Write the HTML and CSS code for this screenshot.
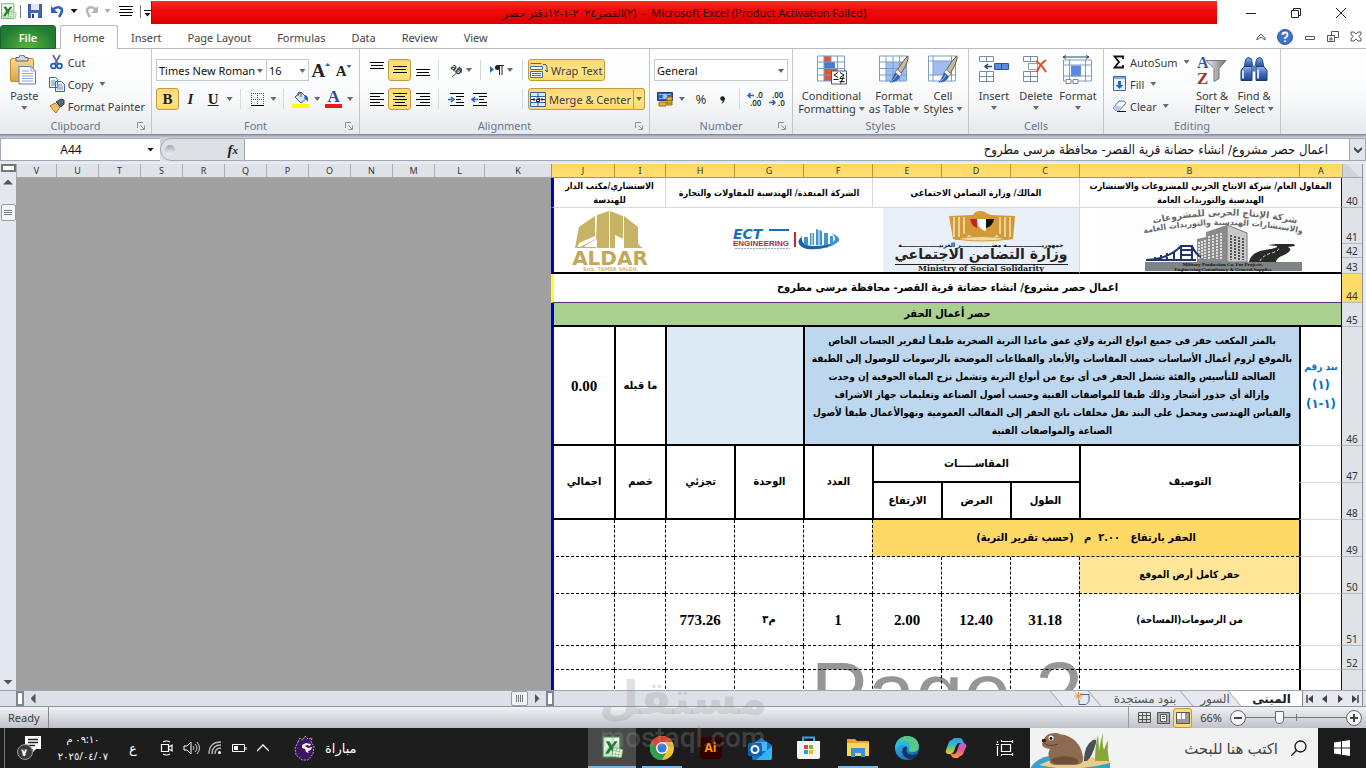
FILE: index.html
```html
<!DOCTYPE html>
<html lang="en">
<head>
<meta charset="utf-8">
<title>Microsoft Excel</title>
<link rel="stylesheet" href="styles.css">
</head>
<body>
<svg class="defs" aria-hidden="true">
  <defs>
    <linearGradient id="gGold" x2="0" y2="1"><stop stop-color="#fbd98c"/><stop offset="1" stop-color="#e0a33a"/></linearGradient>
    <linearGradient id="gBlue" x2="0" y2="1"><stop stop-color="#8fb2e6"/><stop offset=".5" stop-color="#3f6fc0"/><stop offset="1" stop-color="#21437f"/></linearGradient>
    <linearGradient id="gSteel" x2="1" y2="0"><stop stop-color="#f2f2f2"/><stop offset="1" stop-color="#707070"/></linearGradient>
    <linearGradient id="gEdge" x2="1" y2="1"><stop stop-color="#39c6f0"/><stop offset="1" stop-color="#0c4fa8"/></linearGradient>
    <linearGradient id="gCop" x2="0" y2="1"><stop stop-color="#2a9df4"/><stop offset=".45" stop-color="#3bb9c4"/><stop offset=".7" stop-color="#8ccc4a"/><stop offset="1" stop-color="#f8c21c"/></linearGradient>
    <linearGradient id="gCop2" x2="0" y2="1"><stop stop-color="#b55ef0"/><stop offset=".5" stop-color="#f0568f"/><stop offset="1" stop-color="#ff9a3c"/></linearGradient>
    <symbol id="excel" viewBox="0 0 22 22">
      <path d="M2 1h16v19H2z" fill="#e4f3e2" stroke="#4a9a52"/>
      <path d="M3 2h14v17H3z" fill="#c4e3bf"/><path d="M3 2h14v5Q8 7 3 14z" fill="#eef8ec"/>
      <path d="M4.500 5h3.600l2 3.500L13 5h3l-4.300 5.700L15.500 17h-3.800l-2-4-2.700 4H4l4-6.300z" fill="#1e7b34"/>
      <path d="M12 11l9 2-1.500 7.500-9-1z" fill="#f7fbf6" stroke="#6fae6b" stroke-width=".8"/><path d="M12 14l8 1.500M11.500 17l8 1.200M15 12l-1.500 8M18 12.500l-1.500 8" stroke="#7fb77a" stroke-width=".7"/>
    </symbol>
    <symbol id="brush" viewBox="0 0 20 28">
      <path d="M19 0Q20 6 12 18l-4-3Q14 5 19 0z" fill="#c9b9a2" stroke="#6b5b48"/>
      <path d="M8 14l5 4-2 3-5-4z" fill="#f4f4f4" stroke="#666" stroke-width=".7"/>
      <path d="M6 17l5 4q-2 6-11 6 3-2 6-10z" fill="#2f62b0"/><path d="M2 26q4-2 6-7" stroke="#9dbdf0" fill="none"/>
    </symbol>
    <symbol id="launch" viewBox="0 0 8 8"><path d="M.5 6V.5H6M3.500 3.500l3.500 3.500M7.500 3.500v4h-4" fill="none" stroke="#8d939b"/></symbol>
  </defs>
</svg>

<header class="titlebar">
  <div class="quick">
    <button class="q-app" aria-label="Excel"><svg width="17" height="17"><use href="#excel"/></svg></button>
    <i class="bar"></i>
    <button class="q-btn" aria-label="Save"><svg width="14" height="14" viewBox="0 0 14 14"><path d="M1 0h12l1 1v13H0V1z" fill="#4467b8" stroke="#263f87" stroke-width=".8"/><path d="M3 0h8v6H3z" fill="#dfe9fa"/><path d="M3 9h7v5H3z" fill="#fff"/><path d="M4 10h2v4H4z" fill="#263f87"/></svg></button>
    <button class="q-btn undo" aria-label="Undo"><svg width="13" height="13" viewBox="0 0 13 13"><path d="M2 4.500Q6 1 9.500 3T8 12" fill="none" stroke="#2b62b8" stroke-width="2.600"/><path d="M0 1v7h7z" fill="#2b62b8"/></svg><i class="caret dark"></i></button>
    <button class="q-btn redo" aria-label="Redo"><svg width="13" height="13" viewBox="0 0 13 13"><path d="M11 4.500Q7 1 3.500 3T5 12" fill="none" stroke="#b6b6b6" stroke-width="2.600"/><path d="M13 1v7H6z" fill="#b6b6b6"/></svg><i class="caret light"></i></button>
    <button class="q-btn center" aria-label="Center"><svg width="14" height="10" viewBox="0 0 14 10"><path d="M0 .5h14M1 3.500h12M0 6.500h14M1 9.500h12" stroke="#000"/></svg></button>
    <i class="bar"></i>
    <button class="q-more" aria-label="Customize"><i class="dash"></i><i class="caret dark"></i></button>
  </div>
  <h1 class="caption"><bdi>دفتر حصر</bdi><bdi>٢٠٢٤-١-١٢</bdi><bdi>القصر</bdi><bdi>(٢)</bdi><span>&nbsp; - &nbsp;Microsoft Excel (Product Activation Failed)</span></h1>
  <div class="winctl">
    <button aria-label="Minimize"><svg width="12" height="12"><path d="M1 6.500h10" stroke="#222"/></svg></button>
    <button aria-label="Restore"><svg width="12" height="12"><path d="M1.500 3.500h7v7h-7zM3.500 3V1.500h7v7H9" fill="none" stroke="#222"/></svg></button>
    <button aria-label="Close"><svg width="12" height="12"><path d="M1 1l10 10M11 1L1 11" stroke="#222"/></svg></button>
  </div>
</header>

<nav class="tabs">
  <button class="tab file">File</button>
  <button class="tab on">Home</button>
  <button class="tab">Insert</button>
  <button class="tab">Page Layout</button>
  <button class="tab">Formulas</button>
  <button class="tab">Data</button>
  <button class="tab">Review</button>
  <button class="tab">View</button>
  <div class="docctl">
    <button aria-label="Collapse ribbon"><svg width="10" height="8"><path d="M1 5l4-4 4 4v2L5 4 1 7z" fill="none" stroke="#555"/></svg></button>
    <button aria-label="Help"><svg width="16" height="16"><circle cx="8" cy="8" r="7.500" fill="#3c74cf" stroke="#2c58a2"/><path d="M5.500 6q0-2.500 2.500-2.500T10.500 6Q10.500 7.500 8 9v1M8 11.500V13" stroke="#fff" stroke-width="1.800" fill="none"/></svg></button>
    <button aria-label="Minimize window"><svg width="12" height="12"><path d="M1.500 5.500h9v3h-9z" fill="none" stroke="#555"/></svg></button>
    <button aria-label="Restore window"><svg width="12" height="12"><path d="M.5 4.500h7v6h-7zM4.500 4V.5h7v6H8M3 7h2v2H3z" fill="none" stroke="#555"/></svg></button>
    <button aria-label="Close window"><svg width="12" height="12"><path d="M1 1h3l2 2 2-2h3v2L9 5.500 11 8v2H8L6 8l-2 2H1V8l2-2.500L1 3z" fill="none" stroke="#555"/></svg></button>
  </div>
</nav>

<section class="ribbon">
  <div class="group g-clip">
    <div class="body">
      <button class="big paste"><svg width="28" height="30" viewBox="0 0 28 30"><rect x=".5" y="3.500" width="23" height="23" rx="1.500" fill="url(#gGold)" stroke="#c08a34"/><path d="M6 5V2.500h3Q9 0 12 0t3 2.500h3V6H6z" fill="#d4d7dc" stroke="#62666d"/><path d="M9 11.500h12l4.500 4.500v13H9z" fill="#fff" stroke="#5a7db5"/><path d="M21 11.500v4.500h4.500M12 16h7M12 18.500h11M12 21h11M12 23.500h11M12 26h11" stroke="#8aa6d3" fill="none"/></svg><span>Paste</span><i class="caret"></i></button>
      <div class="stack">
        <button class="small"><svg width="16" height="16" viewBox="0 0 16 16"><path d="M4 1l5 9M11 1L6 10" stroke="#5f6f8c" stroke-width="1.800"/><circle cx="4.500" cy="12" r="2.400" fill="none" stroke="#2759b0" stroke-width="1.800"/><circle cx="10.500" cy="12" r="2.400" fill="none" stroke="#2759b0" stroke-width="1.800"/></svg>Cut</button>
        <button class="small"><svg width="16" height="16" viewBox="0 0 16 16"><path d="M.5 1.500h6l2 2v8h-8zM6.500 5.500h6l3 3v7h-9z" fill="#edf3fd" stroke="#3b65ae"/><path d="M2 5h4M2 7h4M2 9h4M8 9h5M8 11h6M8 13h6" stroke="#6b8dcb"/></svg>Copy<i class="caret"></i></button>
        <button class="small"><svg width="16" height="16" viewBox="0 0 16 16"><path d="M1 8l5-3 5 4-4 6z" fill="#eec165" stroke="#a9772b"/><path d="M7 4l5 5 3-3V2l-3-1z" fill="#596780" stroke="#333c50"/></svg>Format Painter</button>
      </div>
    </div>
    <div class="gname">Clipboard<svg class="lch" width="8" height="8"><use href="#launch"/></svg></div>
  </div>

  <div class="group g-font">
    <div class="rows">
      <div class="row">
        <label class="combo w111"><select aria-label="Font"><option>Times New Roman</option></select></label><label class="combo w43 join"><select aria-label="Font size"><option>16</option></select></label>
        <button class="t22 grow" aria-label="Grow font"><b class="serif s18">A</b><i class="up"></i></button><button class="t22 shrink" aria-label="Shrink font"><b class="serif s14">A</b><i class="dn"></i></button>
      </div>
      <div class="row">
        <button class="t22 act serif s14"><b>B</b></button><button class="t22 serif s14"><em><b>I</b></em></button><button class="t22 serif s14"><b><u>U</u></b></button><button class="cv" aria-label="Underline options"><i class="caret"></i></button><i class="vsep"></i>
        <button class="t22" aria-label="Borders"><svg width="13" height="13"><path d="M.5 0v12M6.500 0v12M12.500 0v12M0 .5h13M0 6.500h13" stroke="#555" stroke-dasharray="1 1"/><path d="M0 12.500h13" stroke="#000"/></svg></button><button class="cv" aria-label="Border options"><i class="caret"></i></button><i class="vsep"></i>
        <button class="t22" aria-label="Fill color"><svg width="17" height="17"><path d="M3 6l6-5 6 6-6 5z" fill="#dbe6f8" stroke="#33579b"/><path d="M6 5V2q1-2 3 0v4" stroke="#444" fill="none"/><path d="M13 4q4 1 3 7-2-3-4-4z" fill="#2f62b8"/><path d="M0 13h17v4H0z" fill="#ff0"/></svg></button><button class="cv" aria-label="Fill options"><i class="caret"></i></button><button class="t22 fcolor serif s16" aria-label="Font color"><b>A</b></button><button class="cv" aria-label="Font color options"><i class="caret"></i></button>
      </div>
    </div>
    <div class="gname">Font<svg class="lch" width="8" height="8"><use href="#launch"/></svg></div>
  </div>

  <div class="group g-align">
    <div class="rows">
      <div class="row">
        <button class="t23 hi" aria-label="Top align"><svg width="14" height="12"><path d="M0 .5h14M1 3.500h12M0 6.500h14" stroke="#000"/></svg></button><button class="t23 act" aria-label="Middle align"><svg width="14" height="12"><path d="M0 2.500h14M1 5.500h12M0 8.500h14" stroke="#000"/></svg></button><button class="t23" aria-label="Bottom align"><svg width="14" height="14"><path d="M0 6.500h14M1 9.500h12M0 12.500h14" stroke="#000"/></svg></button><i class="vsep"></i>
        <button class="t41" aria-label="Orientation"><svg width="16" height="16" viewBox="0 0 16 16"><text x="2" y="7" transform="rotate(40 4 8)" font-family="Liberation Sans" font-size="10" font-weight="bold" fill="#333">ab</text><path d="M5 15l9-8M14.500 10.500V6.500h-4" stroke="#555" fill="none"/></svg><i class="caret"></i></button><i class="vsep"></i>
        <button class="t41 dirb" aria-label="Text direction"><svg width="14" height="12"><path d="M0 2l4 3.500L0 9z" fill="#2f6bc0"/><path d="M9.500 1v10M12 1v10M14 1.500H8" stroke="#222" fill="none"/><circle cx="7.500" cy="3.500" r="2.500" fill="#222"/></svg><i class="caret"></i></button><i class="vsep"></i>
        <button class="wide act"><svg width="18" height="15" viewBox="0 0 18 15"><path d="M.5.500h11M.5 3.500h12v3H.5zM.5 8.500h12v6H.5z" fill="#fff" stroke="#446aae"/><path d="M2 10.500h9M2 12.500h9" stroke="#446aae"/><path d="M13 1.500h2q2 0 2 3v4M15 7l2 2 1-2" stroke="#335a9d" fill="none"/></svg>Wrap Text</button>
      </div>
      <div class="row">
        <button class="t23" aria-label="Align left"><svg width="14" height="14"><path d="M0 1.500h14M0 4.500h10M0 7.500h14M0 10.500h10M0 13.500h14" stroke="#000"/></svg></button><button class="t23 act" aria-label="Align center"><svg width="14" height="14"><path d="M0 1.500h14M2 4.500h10M0 7.500h14M2 10.500h10M0 13.500h14" stroke="#000"/></svg></button><button class="t23" aria-label="Align right"><svg width="14" height="14"><path d="M0 1.500h14M4 4.500h10M0 7.500h14M4 10.500h10M0 13.500h14" stroke="#000"/></svg></button><i class="vsep"></i>
        <button class="t23 ml5" aria-label="Increase indent"><svg width="16" height="14"><path d="M2 1.500h14M8 4.500h8M8 7.500h5M8 10.500h8M2 13.500h14" stroke="#000"/><path d="M0 7.500h4M3 5l3 2.500L3 10" stroke="#2565c0" stroke-width="1.600" fill="none"/></svg></button><button class="t23 mr32" aria-label="Decrease indent"><svg width="16" height="14"><path d="M2 1.500h14M8 4.500h8M8 7.500h5M8 10.500h8M2 13.500h14" stroke="#000"/><path d="M2 7.500h5M4 5L1 7.500 4 10" stroke="#2565c0" stroke-width="1.600" fill="none"/></svg></button><i class="vsep"></i>
        <button class="wide act merge"><svg width="16" height="15" viewBox="0 0 16 15"><path d="M.5.500h15v14H.5z" fill="#dce8fa" stroke="#3460a8"/><path d="M0 4.500h16M0 10.500h16M8 0v4M8 11v4" stroke="#3460a8"/><path d="M1 5h14v5H1z" fill="#fff"/><path d="M1 7.500h4M11 7.500h4M3.500 6l1.500 1.500L3.500 9M12.500 6L11 7.500 12.500 9M6.500 6h3v3.500h-3v-2h3" stroke="#222" fill="none"/></svg>Merge &amp; Center</button><button class="mcv act" aria-label="Merge options"><i class="caret"></i></button>
      </div>
    </div>
    <div class="gname">Alignment<svg class="lch" width="8" height="8"><use href="#launch"/></svg></div>
  </div>

  <div class="group g-num">
    <div class="rows">
      <div class="row"><label class="combo w133"><select aria-label="Number format"><option>General</option></select></label></div>
      <div class="row">
        <button class="cur" aria-label="Accounting format"><svg width="17" height="16"><path d="M.5 1.500h15v8H.5z" fill="#2d61b5" stroke="#1c3f80"/><path d="M2 3.500h12M2 7.500h12" stroke="#8fb3ea"/><circle cx="8" cy="5.500" r="2.300" fill="#a9c6f2"/><path d="M10 6h5v8h-5zM2 11h7v4H2z" fill="#e8b23c" stroke="#9b6b14"/><path d="M10 9.500h5M10 12h5" stroke="#9b6b14"/></svg><i class="caret"></i></button><button class="t23 s13">%</button><button class="t23 comma" aria-label="Comma style"><svg width="5" height="8"><circle cx="2.500" cy="2.500" r="2.300" fill="#222"/><path d="M4.800 2q.2 4-3.300 6 1.500-2 1.300-4z" fill="#222"/></svg></button><i class="vsep"></i>
        <button class="t23 dec" aria-label="Increase decimal"><svg width="17" height="14"><text x="9" y="6" font-size="8">.0</text><text x="3" y="14" font-size="8">.00</text><path d="M7 3.500H1M3.500 1L1 3.500 3.500 6" stroke="#2565c0" stroke-width="1.500" fill="none"/></svg></button><button class="t23 dec" aria-label="Decrease decimal"><svg width="17" height="14"><text x="3" y="6" font-size="8">.00</text><text x="9" y="14" font-size="8">.0</text><path d="M0 10.500h6M3.500 8L6 10.500 3.500 13" stroke="#2565c0" stroke-width="1.500" fill="none"/></svg></button>
      </div>
    </div>
    <div class="gname">Number<svg class="lch" width="8" height="8"><use href="#launch"/></svg></div>
  </div>

  <div class="group g-sty">
    <div class="body mid">
      <button class="big w69"><svg width="30" height="29" viewBox="0 0 30 29"><path d="M.5.500h27v25H.5z" fill="#fff"/><path d="M7 .5h7v25H7z" fill="#e8503a"/><path d="M7 6.500h11v6H7z" fill="#4a7bd0"/><path d="M7 13h13v6H7z" fill="#e8503a"/><path d="M.5.500h27v25H.5zM7 0v26M14 0v7M20.500 0v26M0 6.500h28M0 13h28M0 19.500h28" stroke="#7a9cc6" fill="none"/><path d="M14.500 15.500h15v13h-15z" fill="#fff" stroke="#555"/><path d="M21 17l-4 2.500 4 2.500M23 17l4 2.500-4 2.500M16.500 24h5M22.500 23h5M22.500 26h5M26.500 21l-3 7" stroke="#111" fill="none"/></svg><span>Conditional<br>Formatting<i class="caret"></i></span></button>
      <button class="big w54"><svg width="30" height="29" viewBox="0 0 30 29"><path d="M.5.500h27v25H.5z" fill="#fff"/><path d="M7 6.500h21v19H7z" fill="#9dbdf3"/><path d="M.5.500h27v25H.5zM7 0v26M14 0v26M20.500 0v26M0 6.500h28M0 13h28M0 19.500h28" stroke="#7a9cc6" fill="none"/><use href="#brush" x="10" y="0" width="20" height="28"/></svg><span>Format<br>as Table<i class="caret"></i></span></button>
      <button class="big w42"><svg width="30" height="29" viewBox="0 0 30 29"><path d="M.5.500h27v25H.5z" fill="#fff"/><path d="M5 5.500h18v14H5z" fill="#9dbdf3"/><path d="M.5.500h27v25H.5zM5 0v26M23.500 0v26M0 5.500h28M0 19.500h28" stroke="#7a9cc6" fill="none"/><use href="#brush" x="10" y="0" width="20" height="28"/></svg><span>Cell<br>Styles<i class="caret"></i></span></button>
    </div>
    <div class="gname">Styles</div>
  </div>

  <div class="group g-cells">
    <div class="body mid">
      <button class="big w42"><svg width="30" height="28" viewBox="0 0 30 28"><path d="M.5.500h14v5H.5zM.5 15.500h14v10H.5zM7.500 0v6M7.500 15v11M0 20.500h15" fill="#fff" stroke="#7a8ba6"/><path d="M15.500 7.500h14v6h-14z" fill="#5b8ae0" stroke="#2d559d"/><path d="M22.500 8v6" stroke="#2d559d"/><path d="M13 10.500H6M9 8l-3 2.500L9 13" stroke="#24466f" stroke-width="1.500" fill="none"/></svg><span>Insert</span><i class="caret"></i></button>
      <button class="big w42"><svg width="26" height="28" viewBox="0 0 26 28"><path d="M.5.500h14v5H.5zM.5 15.500h14v10H.5zM7.500 0v6M7.500 15v11M0 20.500h15" fill="#fff" stroke="#7a8ba6"/><path d="M5.500 7.500h9v6h-9z" fill="none" stroke="#24466f" stroke-dasharray="1 1"/><path d="M13 5q5 3 10 11M23 4q-6 4-9 12" stroke="#e8442c" stroke-width="2" fill="none"/></svg><span>Delete</span><i class="caret"></i></button>
      <button class="big w42"><svg width="30" height="29" viewBox="0 0 30 29"><path d="M.5 4.500h28v21H.5z" fill="#fff"/><path d="M8 10h10v11H8z" fill="#5b8ae0"/><path d="M.5 4.500h28v21H.5zM6.500 4v22M22.500 4v22M0 9.500h29M0 20.500h29" stroke="#7a9cc6" fill="none"/><path d="M0 1.500h26M3 0L0 1.500 3 3M23 0l3 1.500L23 3" stroke="#24466f" fill="none"/><path d="M3 24h5v4H3zM10 24h5v4h-5z" fill="#fff" stroke="#888"/></svg><span>Format</span><i class="caret"></i></button>
    </div>
    <div class="gname">Cells</div>
  </div>

  <div class="group g-edit">
    <div class="body">
      <div class="stack">
        <button class="small"><svg width="16" height="16"><path d="M12 5V2.500H3.500L8 8l-4.500 5.500H12V11" stroke="#111" stroke-width="1.800" fill="none"/></svg>AutoSum<i class="caret"></i></button>
        <button class="small"><svg width="16" height="16"><path d="M2.500.500h12v14h-12z" fill="#eef4fd" stroke="#3865ad"/><path d="M3 1h11v2H3z" fill="#88a8dc"/><path d="M7 5h3v4h2.500l-4 4-4-4H7z" fill="#2a66c8"/></svg>Fill<i class="caret"></i></button>
        <button class="small"><svg width="16" height="16"><path d="M2 10l6-7h5l2 2-6 7H4z" fill="#f4f7fc" stroke="#5b759f"/><path d="M2 10l2 2h5l2-3-2-1H4z" fill="#b7cbea"/><path d="M6 13.500h9" stroke="#111"/></svg>Clear<i class="caret"></i></button>
      </div>
      <button class="big w42"><svg width="30" height="29" viewBox="0 0 30 29"><path d="M9 5h20l-7 8v10l-5 3V13z" fill="url(#gSteel)" stroke="#777"/><text x="0" y="12" font-family="Liberation Serif" font-weight="bold" font-size="16" fill="#2c5aa8">A</text><text x="0" y="28" font-family="Liberation Serif" font-weight="bold" font-size="17" fill="#a33526">Z</text></svg><span>Sort &amp;<br>Filter<i class="caret"></i></span></button>
      <button class="big w42"><svg width="28" height="27" viewBox="0 0 28 27"><path d="M5 6q0-4 3-5 4 0 4 4l1 7H4zM16 5q0-4 4-4 3 1 3 5l1 6h-9z" fill="url(#gBlue)" stroke="#2d4f8f"/><path d="M1 14l3-4h8v14H1zM16 10h8l3 4v10H16z" fill="url(#gBlue)" stroke="#1f3c72"/><path d="M12 9h4v6h-4z" fill="#5b7fbf"/><path d="M3 14v8M18 13v9" stroke="#cfe0fa" stroke-width="2"/></svg><span>Find &amp;<br>Select<i class="caret"></i></span></button>
    </div>
    <div class="gname">Editing</div>
  </div>
</section>

<div class="formula">
  <label class="namebox"><input aria-label="Name box" value="A44"><i class="caret dark"></i></label>
  <div class="fxbar"><i class="knob"></i><button class="fx" aria-label="Insert function"><i>f</i><sub>x</sub></button></div>
  <input class="ftext" dir="rtl" aria-label="Formula" value="اعمال حصر مشروع/ انشاء حضانة قرية القصر- محافظة مرسى مطروح">
  <button class="expand" aria-label="Expand"><svg width="8" height="6"><path d="M0 1l4 4 4-4" stroke="#444" stroke-width="2" fill="none"/></svg></button>
</div>

<main class="work">
  <div class="vscroll"><button class="split" aria-label="Split"></button><button class="arr" aria-label="Scroll up"><i class="tri up"></i></button><button class="thumb" aria-label="Scroll position"><svg width="8" height="8"><path d="M0 1.500h8M0 3.500h8M0 5.500h8" stroke="#777"/></svg></button><button class="arr last" aria-label="Scroll down"><i class="tri down"></i></button></div>
  <div class="sheet">
    <div class="pagemark">Page 2</div>
    <table dir="rtl">
      <colgroup><col class="c-rh"><col class="c-a"><col class="c-b"><col class="c-m" span="6"><col class="c-i"><col class="c-j"><col class="c-k"><col class="c-l"><col class="c-n" span="9"><col></colgroup>
      <thead>
        <tr><th class="corner"></th><th class="sel">A</th><th class="sel">B</th><th class="sel">C</th><th class="sel">D</th><th class="sel">E</th><th class="sel">F</th><th class="sel">G</th><th class="sel">H</th><th class="sel">I</th><th class="sel">J</th><th>K</th><th>L</th><th>M</th><th>N</th><th>O</th><th>P</th><th>Q</th><th>R</th><th>S</th><th>T</th><th>U</th><th>V</th></tr>
      </thead>
      <tbody>
        <tr class="r30"><th>40</th><td class="g edge" colspan="2">المقاول العام/ شركة الانتاج الحربي للمشروعات والاستشارت<br>الهندسية والتوريدات العامة</td><td class="g" colspan="3">المالك/ وزارة التضامن الاجتماعى</td><td class="g" colspan="3">الشركة المنفذة/ الهندسية للمقاولات والتجارة</td><td class="g last" colspan="2">الاستشاري/مكتب الدار<br>للهندسة</td><td class="desk" rowspan="14" colspan="12"></td></tr>
        <tr class="r36"><th>41</th>
          <td class="logo gl edge" rowspan="3" colspan="2"><svg class="l-mil" width="246" height="64" viewBox="0 0 246 64"><rect width="246" height="64" fill="#fdfdfd"/>
            <path id="arc1" d="M52 17Q130-2 208 17" fill="none"/><path id="arc2" d="M42 27Q130 7 214 27" fill="none"/>
            <text font-size="9" font-weight="bold" fill="#666" font-family="DejaVu Sans"><textPath href="#arc1" startOffset="50%" text-anchor="middle">شركة الإنتاج الحربى للمشروعات</textPath></text>
            <text font-size="8" font-weight="bold" fill="#666" font-family="DejaVu Sans"><textPath href="#arc2" startOffset="50%" text-anchor="middle">والاستشارات الهندسية والتوريدات العامة</textPath></text>
            <path d="M102 54V31l9-2v-5l21-7v37z" fill="#8b8b8b"/><path d="M132 17l20 8v29h-20z" fill="#c9c9c9" stroke="#777"/><path d="M104 34v17M107 33v18M110 32v19M114 28v23M118 27v24M122 26v25M126 25v26" stroke="#fff" stroke-width="1.500" stroke-dasharray="2 1"/><path d="M136 27v25M140 28v24M144 29v23M148 30v22" stroke="#555" stroke-width="2" stroke-dasharray="2 1"/>
            <path d="M154 54q2-10 16-12 14-2 12-4l-9-1 8-1h18l1 2-7 1q6 3-4 8-8 3-8 7z" fill="#2a2a2a"/><path d="M165 53q3-6 12-8 9-3 6-6" stroke="#ddd" stroke-dasharray="3 2" fill="none"/>
            <path d="M51 52h50M86 53V38h11v15M86 42h11M86 47h11M51 52q23-1 35-14M97 38q4 9 9 11M60 52v-3M66 52v-5M72 52v-7M79 52V44" stroke="#20346f" stroke-width="2" fill="none"/>
            <path d="M50 54h157v9H50z" fill="#7e8386"/><text x="128" y="58" text-anchor="middle" font-family="Liberation Serif" font-weight="bold" font-size="5" fill="#111">Military Production Co. For Projects.</text><text x="128" y="63" text-anchor="middle" font-family="Liberation Serif" font-weight="bold" font-size="5" fill="#111">Engineering Consultancy &amp; General Supplies</text></svg></td>
          <td class="logo" rowspan="3" colspan="3"><svg class="l-min" width="196" height="64" viewBox="0 0 196 64"><rect width="196" height="64" fill="#e9eff7"/>
            <path d="M66 8l24-1q2-4 7-4t6 2l5 2 24 1-2 23q-12 2-16-4-14 9-28 0-6 6-16 4z" fill="#d29a37"/><path d="M71 9v20M76 9v20M81 9v17M117 9v17M122 9v20M127 9v20" stroke="#f7e3ba" stroke-width="1.500"/><path d="M87 11h7v9q-5-1-7-9z" fill="#c9202a"/><path d="M94 11h9v12q-9-2-9-12z" fill="#fff"/><path d="M103 11h8q-1 7-8 9z" fill="#111"/><path d="M72 31q27-5 54 0-27 4-54 0z" fill="#efdca8" stroke="#d29a37"/>
            <text x="98" y="39" text-anchor="middle" font-size="6" font-family="DejaVu Sans" fill="#111">جمهوريـــــــــــــــــة مصـــــــــــــــر العربيــــــــــــــــــة</text>
            <text x="98" y="51" text-anchor="middle" font-size="14" font-weight="bold" font-family="DejaVu Sans" fill="#222">وزارة التضامن الاجتماعي</text><path d="M12 56.500h173" stroke="#222"/>
            <text x="98" y="63" text-anchor="middle" font-size="8" font-weight="bold" font-family="DejaVu Serif" fill="#222">Ministry of Social Solidarity</text></svg></td>
          <td class="logo" rowspan="3" colspan="3"><svg class="l-ect" width="108" height="22" viewBox="0 0 108 22">
            <text x="0" y="11" font-family="DejaVu Sans" font-size="14" font-weight="bold" font-style="italic" fill="#1c6fb8">ECT</text><path d="M36 1h20v2H36z" fill="#1c6fb8"/><text x="0" y="18" font-family="Liberation Sans" font-size="8" font-weight="bold" fill="#b42b30">ENGINEERING</text><path d="M2 20.500h55" stroke="#8fabc8" stroke-dasharray="2 1"/>
            <path d="M61 4h2v15h-2z" fill="#c5262c"/><path d="M69 8q-9 9 5 13 20 2 31-8-9 5-26 5-12-1-10-10z" fill="#1a62ae"/><path d="M71 9h4v8h-4zM77 5h4v12h-4zM83 1l6 2v14h-6zM91 5h4v12h-4zM97 8h3v8h-3z" fill="#3f94cf"/><path d="M79 5v12M86 2v15" stroke="#fff"/><path d="M98 5q10 4 8 8-5 5-14 7 9-5 10-9 0-3-4-6z" fill="#3f94cf"/></svg></td>
          <td class="logo last" rowspan="3" colspan="2"><svg class="l-ald" width="96" height="60" viewBox="0 0 96 60"><path d="M17 16l16-11v20L17 32q0 3-4 5zM35 4l12-4v37H35v-9L24 34q-1 3-8 3l18-9zM48 0l13 5v23l-8-4v13h-5zM62 5l14 11v16q1 3 5 5H62z" fill="#c7b266"/><path d="M13 36h21v1H13z" fill="#c7b266"/><text x="48" y="54" text-anchor="middle" font-family="DejaVu Sans" font-weight="bold" font-size="20" fill="#c2a95a">ALDAR</text><text x="48" y="60" text-anchor="middle" font-family="DejaVu Sans" font-size="5" fill="#cdbb83">Eng. TAMER SALEH</text></svg></td></tr>
        <tr class="r14"><th>42</th></tr>
        <tr class="r16"><th>43</th></tr>
        <tr class="r29"><th class="sel">44</th><td class="title edge last" colspan="10">اعمال حصر مشروع/ انشاء حضانة قرية القصر- محافظة مرسى مطروح</td></tr>
        <tr class="r24"><th>45</th><td class="green edge last" colspan="10">حصر أعمال الحفر</td></tr>
        <tr class="r119"><th>46</th><td class="item edge k">بند رقم<br><span>(١)</span><br><span>(١-١)</span></td><td class="desc k" colspan="5">بالمتر المكعب حفر فى جميع انواع التربة ولاي عمق ماعدا التربة الصخرية طبقـأ لتقرير الجسات الخاص<br>بالموقع لزوم أعمال الأساسات حسب المقاسات والأبعاد والقطاعات الموضحة بالرسومات للوصول إلى الطبقة<br>الصالحة للتأسيس والفئة تشمل الحفر فى أى نوع من أنواع التربة وتشمل نزح المياة الجوفية إن وجدت<br>وإزالة أي جذور أشجار وذلك طبقا للمواصفات الفنية وحسب أصول الصناعة وتعليمات جهاز الاشراف<br>والقياس الهندسى ومحمل على البند نقل مخلفات ناتج الحفر إلى المقالب العمومية ونهوالأعمال طبقأ لأصول<br>الصناعة والمواصفات الفنية</td><td class="pale k" colspan="2"></td><td class="k">ما قبله</td><td class="num kb last">0.00</td></tr>
        <tr class="r37"><th>47</th><td class="edge ka"></td><td class="k" rowspan="2">التوصيف</td><td class="k" colspan="3">المقاســـــات</td><td class="k" rowspan="2">العدد</td><td class="k" rowspan="2">الوحدة</td><td class="k" rowspan="2">تجزئي</td><td class="k" rowspan="2">خصم</td><td class="kb last" rowspan="2">اجمالي</td></tr>
        <tr class="r37"><th>48</th><td class="edge ka"></td><td class="k">الطول</td><td class="k">العرض</td><td class="k">الارتفاع</td></tr>
        <tr class="r37"><th>49</th><td class="edge ka"></td><td class="gold d" colspan="4">الحفر بارتفاع &nbsp; ٢.٠٠ &nbsp;م &nbsp; (حسب تقرير التربة)</td><td class="d"></td><td class="d"></td><td class="d"></td><td class="d"></td><td class="d last"></td></tr>
        <tr class="r37"><th>50</th><td class="edge ka"></td><td class="sand d">حفر كامل أرض الموقع</td><td class="d"></td><td class="d"></td><td class="d"></td><td class="d"></td><td class="d"></td><td class="d"></td><td class="d"></td><td class="d last"></td></tr>
        <tr class="r52"><th>51</th><td class="edge ka"></td><td class="d part">من الرسومات(المساحة)</td><td class="d num">31.18</td><td class="d num">12.40</td><td class="d num">2.00</td><td class="d num">1</td><td class="d">م٣</td><td class="d num">773.26</td><td class="d"></td><td class="d last"></td></tr>
        <tr class="r24"><th>52</th><td class="edge ka"></td><td class="d"></td><td class="d"></td><td class="d"></td><td class="d"></td><td class="d"></td><td class="d"></td><td class="d"></td><td class="d"></td><td class="d last"></td></tr>
        <tr class="r24"><th></th><td class="edge ka"></td><td class="d"></td><td class="d"></td><td class="d"></td><td class="d"></td><td class="d"></td><td class="d"></td><td class="d"></td><td class="d"></td><td class="d last"></td></tr>
      </tbody>
    </table>
  </div>
  <div class="rim"></div>
</main>

<div class="sheetbar">
  <div class="hscroll"><button class="grip" aria-label="Resize"></button><button class="harr" aria-label="Scroll left"><i class="tri left"></i></button><div class="track"></div><button class="hthumb" aria-label="Scroll position"><svg width="9" height="7"><path d="M1.500 0v7M3.500 0v7M5.500 0v7M7.500 0v7" stroke="#777"/></svg></button><button class="harr" aria-label="Scroll right"><i class="tri right"></i></button><button class="grip" aria-label="Resize tabs"></button></div>
  <div class="sheets">
    <button class="sh add" aria-label="Insert sheet"><svg width="16" height="13"><path d="M6 2.500h9v7l-3 3H5V8" fill="#e3ecfa" stroke="#4a67a0"/><path d="M4.500 0v8M.5 4h8M1.500 1l6 6M7.500 1l-6 6" stroke="#dd9a28"/></svg></button>
    <button class="sh w92">بنود مستجدة</button>
    <button class="sh w46">السور</button>
    <button class="sh w59 on">المبنى</button>
    <div class="nav"><button aria-label="First"><svg width="8" height="8"><path d="M1 0v8" stroke="#444" stroke-width="1.500"/><path d="M7 0L2 4l5 4z" fill="#444"/></svg></button><button aria-label="Previous"><svg width="8" height="8"><path d="M6 0L1 4l5 4z" fill="#444"/></svg></button><button aria-label="Next"><svg width="8" height="8"><path d="M2 0l5 4-5 4z" fill="#444"/></svg></button><button aria-label="Last"><svg width="8" height="8"><path d="M7 0v8" stroke="#444" stroke-width="1.500"/><path d="M1 0l5 4-5 4z" fill="#444"/></svg></button></div>
  </div>
</div>

<footer class="status">
  <span class="ready">Ready</span>
  <div class="zoomctl">
    <button aria-label="Normal"><svg width="13" height="11"><path d="M.5.500h12v10H.5zM4.500 0v11M8.500 0v11M0 3.500h13M0 7.500h13" fill="none" stroke="#555"/></svg></button>
    <button aria-label="Page layout"><svg width="13" height="12"><path d="M.5.500h12v11H.5z" fill="#aaa" stroke="#555"/><path d="M3.500 2.500h6v7h-6z" fill="#fff" stroke="#555"/><path d="M5 4.500h3M5 6.500h3" stroke="#555"/></svg></button>
    <button class="act" aria-label="Page break preview"><svg width="14" height="12"><path d="M.5.500h13v11H.5z" fill="#999" stroke="#555"/><path d="M1 1h4v6H1zM6 1h3v6H6z" fill="#fff"/></svg></button>
    <span class="pct">66%</span>
    <button class="rnd" aria-label="Zoom out"><svg width="16" height="16"><circle cx="8" cy="8" r="7.500" fill="#f5f6f8" stroke="#666"/><path d="M4 8h8" stroke="#444" stroke-width="2"/></svg></button>
    <input class="zoom" type="range" min="0" max="100" value="32" aria-label="Zoom">
    <button class="rnd" aria-label="Zoom in"><svg width="16" height="16"><circle cx="8" cy="8" r="7.500" fill="#f5f6f8" stroke="#666"/><path d="M4 8h8M8 4v8" stroke="#444" stroke-width="2"/></svg></button>
  </div>
</footer>

<div class="taskbar">
  <div class="tray">
    <button class="note" aria-label="Notifications"><svg width="26" height="26" viewBox="0 0 26 26"><path d="M8 1h16v13h-5l-3 3v-3H8z" fill="#fff"/><path d="M11 4.500h10M11 7.500h10M11 10.500h7" stroke="#222" stroke-width="1.300"/><circle cx="8" cy="17" r="7.500" fill="#3a3a3a" stroke="#999"/></svg><b>٧</b></button>
    <div class="clock" dir="rtl"><span>٠٩:١٠ م</span><span dir="ltr">٢٠٢٥/٠٤/٠٧</span></div>
    <button class="lang">ع</button>
    <button class="ti" aria-label="Meet now"><svg width="14" height="16"><path d="M1.500 4.500h7v7h-7zM9 7l3-2v6L9 9M3 2q3.500-2 7 0M3 14q3.500 2 7 0" fill="none" stroke="#fff" stroke-width="1.200"/></svg></button>
    <button class="ti" aria-label="Volume"><svg width="17" height="14"><path d="M1 5h3l4-4v12L4 9H1z" fill="none" stroke="#fff"/><path d="M10 5q2 2 0 4M12 3q4 4 0 8M14 1q5 6 0 12" fill="none" stroke="#ccc"/></svg></button>
    <button class="ti" aria-label="Network"><svg width="14" height="14"><path d="M1 13Q1 1 13 1M4 13q0-9 9-9M7 13q0-6 6-6" stroke="#bbb" stroke-width="1.300" fill="none"/><circle cx="11.500" cy="11.500" r="1.500" fill="#fff"/></svg></button>
    <button class="ti" aria-label="Battery"><svg width="15" height="10"><path d="M.5 1.500h12v7H.5zM14 4v3" fill="none" stroke="#fff"/><path d="M2 3h4v4H2z" fill="#fff"/></svg></button>
    <button class="ti" aria-label="Hidden icons"><svg width="12" height="8"><path d="M0 7l6-6 6 6" fill="none" stroke="#fff" stroke-width="1.300"/></svg></button>
    <button class="match"><svg width="22" height="25" viewBox="0 0 22 25"><path d="M4 6l2-4 3 2 2-4 3 3 4-1-1 4 3 4-1 8-5 6H8l-6-5-1-7z" fill="#3e1560" stroke="#b59bd0" stroke-dasharray="2 1"/><path d="M8 9l4-2 5 1-1 2-3-1-2 1 3 2 4-1-1 3-3 1 1 2-3-1-1-3-3-1z" fill="#f5eefb"/></svg><span dir="rtl">مباراة</span></button>
  </div>
  <div class="apps">
    <button class="app cur" aria-label="Excel"><svg width="23" height="23"><use href="#excel"/></svg></button>
    <button class="app run" aria-label="Chrome"><svg width="24" height="24" viewBox="0 0 24 24"><circle cx="12" cy="12" r="12" fill="#f7c52b"/><path d="M1.600 6A12 12 0 0 1 22.400 6H12L7 14z" fill="#e0402f"/><path d="M1.600 6A12 12 0 0 0 12 24l5-9h-9z" fill="#2f9e4f"/><circle cx="12" cy="12" r="6" fill="#fff"/><circle cx="12" cy="12" r="4.600" fill="#3b79e1"/></svg></button>
    <button class="app ai"><b>Ai</b></button>
    <button class="app" aria-label="Outlook"><svg width="24" height="23" viewBox="0 0 24 23"><path d="M4 7l9-6 11 7v13q0 2-2 2H6q-2 0-2-2z" fill="#1573cf"/><path d="M7 5h12v9H7z" fill="#47b4f3"/><path d="M24 9v12q0 2-2 2H8z" fill="#2fb4f5"/><rect y="6" width="14" height="13" rx="1.500" fill="#0f5fb5"/><circle cx="7" cy="12.500" r="3.500" stroke="#fff" stroke-width="2" fill="none"/></svg></button>
    <button class="app" aria-label="Store"><svg width="23" height="24" viewBox="0 0 23 24"><path d="M6 6V1.500h11V6" stroke="#29abe2" stroke-width="2" fill="none"/><path d="M0 5h23v16q0 2-2 2H2q-2 0-2-2z" fill="#f4f4f4"/><path d="M7 9h4v4H7z" fill="#e8452c"/><path d="M12 9h4v4h-4z" fill="#86b832"/><path d="M7 14h4v4H7z" fill="#22a4ea"/><path d="M12 14h4v4h-4z" fill="#f8b915"/></svg></button>
    <button class="app run" aria-label="File Explorer"><svg width="22" height="20" viewBox="0 0 22 20"><path d="M0 1h8l2 2h12v15H0z" fill="#e3a52e"/><path d="M0 5h22v13H0z" fill="#ffd65c"/><path d="M4 10h14v9h-4v-4H8v4H4z" fill="#3d8fdc"/></svg></button>
    <button class="app" aria-label="Edge"><svg width="24" height="24" viewBox="0 0 24 24"><circle cx="12" cy="12" r="12" fill="url(#gEdge)"/><path d="M1 8Q5 0 13 0q10 1 11 10 0 6-7 6-4 0-3-3 2-8-7-8-4 0-6 3z" fill="#55c98a"/><path d="M8 12q-3 8 6 11 5 0 8-5-4 2-8 0-4-2-2-6 0-3-4 0z" fill="#10345f"/><path d="M1 8Q4 4 8 5q7 1 6 8Q11 8 7 9q-4 0-7 4z" fill="#2db9e6"/></svg></button>
    <button class="app" aria-label="Copilot"><svg width="22" height="22" viewBox="0 0 22 22"><path d="M7 3q1-2 3-2h5q2 0 3 3l1 2h-5q-2 0-3 3l-2 5q-1 3-4 3H3q-3-1-2-4l3-8q1-2 3-2z" fill="url(#gCop)"/><path d="M15 19q-1 2-3 2H9q-2 0-3-3l-1-1h4q2 0 3-3l2-6q1-2 3-2h2q3 1 2 4l-3 7q-1 2-3 2z" fill="url(#gCop2)"/></svg></button>
    <button class="app" aria-label="Task view"><svg width="18" height="16"><path d="M5 1.500h12M5.500 4.500h9v7h-9zM5 14.500h12M16.500 0v3M5.500 0v2M5.500 14v2M16.500 13v3M1.500 1v2M1.500 6v10M0 4.500h3" fill="none" stroke="#fff" stroke-width="1.200"/></svg></button>
  </div>
  <label class="search"><svg width="79" height="38" viewBox="0 0 79 38"><path d="M0 37q8-12 28-12t51 6v7H0z" fill="#3ba0c8"/><path d="M8 35q24-12 52-8l19 4v2q-38 10-71 2z" fill="#e7cd8d"/><path d="M53 31Q53 15 62 10q4-2 3 3-4 14-9 18z" fill="#4b5058"/><path d="M13 9q3-7 13-6 4 2 8 2 17 6 18 24 0 6-10 6H24q-7-1-5-6-3-5 0-10-8-1-8-5z" fill="#8d6a50"/><path d="M20 29q10-4 20-2t6 7H28q-8 0-8-5z" fill="#6f4e3a"/><path d="M12 12q6 6 15 2" stroke="#5a3d2c" fill="none"/><circle cx="20" cy="8" r="2.500" fill="#fff"/><circle cx="20" cy="8.500" r="1.400" fill="#111"/><path d="M11 9h4v3h-4z" fill="#3a241a"/><path d="M64 31q0-16 3-26 1 12 1 16 2-12 4-18-1 12 1 17 2-6 4-10-1 10 1 21z" fill="#88a637"/></svg><input dir="rtl" aria-label="Search" placeholder="اكتب هنا للبحث"><svg width="16" height="16"><circle cx="9.500" cy="6.500" r="5.500" fill="none" stroke="#111" stroke-width="1.300"/><path d="M5.500 10.500L0 16" stroke="#111" stroke-width="1.300"/></svg></label>
  <button class="start" aria-label="Start"><svg width="16" height="16"><path d="M0 2.500l7-1v6H0zM8 1.300L16 0v7.500H8zM0 8.500h7v6l-7-1zM8 8.500h8V16l-8-1.300z" fill="#fff"/></svg></button>
</div>
<div class="brand"><span dir="rtl">مستقل</span><span>mostaql.com</span></div>
</body>
</html>
```
FILE: styles.css
```css
* { box-sizing: border-box; }
body { margin: 0; height: 100vh; display: flex; flex-direction: column; overflow: hidden; position: relative; background: #fff; color: #3b3b3b; font: 11px/13px "Noto Sans", "DejaVu Sans", sans-serif; }
button, input, select { font: inherit; color: inherit; margin: 0; padding: 0; border: 0; background: none; outline: 0; border-radius: 0; }
button { display: flex; align-items: center; justify-content: center; white-space: nowrap; }
svg { display: block; flex: none; direction: ltr; }
.defs { position: absolute; width: 0; height: 0; }

.caret { display: inline-block; flex: none; width: 6px; height: 4px; background: #6a6a6a; clip-path: polygon(0 0, 100% 0, 50% 100%); }
.caret.dark { width: 7px; height: 4px; background: #111; }
.caret.light { background: #aaa; }
.tri { width: 10px; height: 5px; background: #555; clip-path: polygon(0 0, 100% 0, 50% 100%); }
.tri.up { clip-path: polygon(0 100%, 100% 100%, 50% 0); }
.tri.left { width: 5px; height: 10px; clip-path: polygon(100% 0, 100% 100%, 0 50%); }
.tri.right { width: 5px; height: 10px; clip-path: polygon(0 0, 0 100%, 100% 50%); }
.act { background: linear-gradient(#fdd873, #fee589 60%, #fdd96c); border: 1px solid #c29a3f; border-radius: 3px; }
.serif { font-family: "Liberation Serif", serif; color: #222; }
.s13 { font-size: 13px; } .s14 { font-size: 15px; } .s16 { font-size: 17px; } .s18 { font-size: 19px; }

.titlebar { display: flex; height: 25px; padding-top: 1px; }
.quick { width: 151px; display: flex; align-items: center; padding-bottom: 4px; }
.q-app { width: 18px; }
.quick .bar { width: 1px; height: 13px; background: #777; margin-left: 3px; }
.q-btn { margin-left: 7px; gap: 7px; }
.q-btn.undo { margin-left: 9px; }
.q-btn.center { margin-left: 8px; }
.quick .bar:nth-last-child(2) { margin-left: 7px; }
.q-more { flex-direction: column; gap: 2px; margin-left: 4px; padding-top: 4px; }
.dash { width: 7px; height: 1px; background: #111; }
.caption { flex: 1; height: 23px; margin: 0; display: flex; justify-content: center; align-items: center; background: linear-gradient(#ff2a24, #f00c08 40%, #d90000); color: #2a0000; font-size: 11px; font-weight: 400; border-left: 1px solid #9c1010; }
.winctl { width: 149px; display: flex; justify-content: flex-end; align-items: center; gap: 33px; padding-right: 19px; }

.tabs { display: flex; height: 24px; border-bottom: 1px solid #b6babf; }
.tab { height: 24px; padding: 0 13px; font-size: 11px; color: #444; }
.tab.file { width: 56px; background: radial-gradient(ellipse at bottom, #5cb43a, #1f7c32 75%); color: #fff; font-weight: 600; border: 1px solid #17652b; border-radius: 3px 3px 0 0; }
.tab.on { width: 58px; margin-left: 4px; border: 1px solid #b6babf; border-bottom: 0; border-radius: 3px 3px 0 0; background: #fff; }
.docctl { margin-left: auto; display: flex; align-items: center; gap: 11px; padding-right: 4px; }

.ribbon { display: flex; height: 86px; background: linear-gradient(#fff, #fafbfc 50%, #e6e9ed); border-bottom: 1px solid #888e96; flex: none; }
.group { display: flex; flex-direction: column; position: relative; padding-top: 2px; border-right: 1px solid #c3c7cc; }
.g-clip { width: 152px; } .g-font { width: 208px; } .g-align { width: 290px; } .g-num { width: 143px; } .g-sty { width: 176px; } .g-cells { width: 135px; } .g-edit { width: 177px; }
.body { display: flex; flex: 1; }
.mid { justify-content: center; }
.gname { height: 15px; text-align: center; color: #6a7585; line-height: 13px; }
.lch { position: absolute; right: 6px; bottom: 4px; }
.big { width: 42px; flex-direction: column; justify-content: flex-start; padding-top: 4px; }
.big svg { height: 30px; }
.big > span { margin-top: 4px; text-align: center; line-height: 13px; }
.big > span .caret { margin-left: 3px; margin-bottom: 2px; }
.big > .caret { margin-top: 4px; }
.big.paste { width: 49px; }
.w69 { width: 69px; } .w54 { width: 56px; } .w42 { width: 42px; }
.stack { display: flex; flex-direction: column; width: 103px; }
.small { height: 22px; gap: 3px; justify-content: flex-start; }
.small .caret { margin-left: 3px; }
.g-edit .stack { width: 87px; padding-left: 7px; }
.rows { flex: 1; padding: 8px 4px 0; display: flex; flex-direction: column; gap: 7px; }
.g-align .rows { padding-left: 5px; }
.row { display: flex; height: 22px; }
.combo { position: relative; border: 1px solid #c6cace; background: #fff; color: #111; }
.combo.join { border-left: 0; }
.combo select { appearance: none; width: 100%; height: 20px; padding-left: 2px; }
.combo::after { content: ""; position: absolute; right: 3px; top: 9px; width: 6px; height: 4px; background: #666; clip-path: polygon(0 0, 100% 0, 50% 100%); }
.w111 { width: 112px; } .w43 { width: 43px; } .w133 { width: 134px; }
.t22 { width: 23px; } .t23 { width: 23px; } .t41 { width: 41px; gap: 3px; }
.cur { width: 36px; gap: 5px; margin-right: 2px; }
.cv { width: 10px; }
.vsep { width: 1px; margin: 1px 5px; background: #d5d8dc; }
.g-align .vsep { margin: 1px 0; }
.g-align .vsep:nth-of-type(1) { margin-left: 4px; }
.hi { padding-bottom: 4px; }
.ml5 { margin-left: 5px; }
.mr32 { margin-right: 32px; }
.wide { gap: 3px; padding: 0 2px 0 1px; margin-left: 5px; }
.wide.merge { border-radius: 3px 0 0 3px; }
.mcv { width: 11px; border-left: 0; border-radius: 0 3px 3px 0; }
.up:not(.tri), .dn { width: 5px; height: 3px; background: #2b5fb4; clip-path: polygon(0 100%, 100% 100%, 50% 0); align-self: flex-start; margin-top: 4px; }
.dn { clip-path: polygon(0 0, 100% 0, 50% 100%); }
.shrink { padding-top: 2px; }
.fcolor b { color: #2c4f94; line-height: 14px; border-bottom: 4px solid #f01818; padding: 0 2px; }
.comma { padding-top: 2px; }
.dec text { font-family: "Noto Sans", sans-serif; font-weight: 600; fill: #333; }

.formula { display: flex; height: 29px; padding: 3px 0 3px; background: linear-gradient(#9aa1ab, #cdd4de 3px, #dde3ec 26px, #eef0f6); }
.formula > * { border: 1px solid #a3a9b4; border-width: 1px 0; }
.namebox { width: 160px; display: flex; align-items: center; background: #fff; padding-right: 6px; border-left-width: 1px; }
.namebox input { flex: 1; min-width: 0; text-align: center; color: #111; font-size: 12px; padding-right: 6px; }
.fxbar { width: 85px; display: flex; align-items: center; justify-content: space-between; padding: 0 6px 0 4px; background: #dcdfe4; border-radius: 11px 0 0 11px; border-left-width: 1px; border-right-width: 1px; }
.knob { width: 10px; height: 10px; border-radius: 50%; background: linear-gradient(#a4a8ad, #f2f2f2); }
.fx { font: italic bold 15px/16px "Liberation Serif", serif; color: #222; }
.fx sub { font-size: 11px; }
.ftext { flex: 1; background: #fff; color: #111; padding-right: 21px; font: 13px "DejaVu Sans Condensed", "DejaVu Sans", sans-serif; }
.expand { width: 17px; background: #e1e5eb; border-width: 1px; }

.work { flex: 1; min-height: 0; display: flex; }
.vscroll { width: 16px; display: flex; flex-direction: column; align-items: center; background: #e3e7ee; }
.split { width: 15px; height: 8px; border: 2px solid #777; background: #fff; }
.arr { height: 16px; margin-top: 2px; }
.arr.last { margin-top: auto; }
.thumb { width: 15px; height: 17px; margin-top: 14px; border: 1px solid #969ba5; border-radius: 2px; background: #f5f6f9; }
.sheet { flex: 1; min-width: 0; position: relative; overflow: hidden; background: #fff; z-index: 0; }
.rim { width: 4px; background: #e8ebf0; border-left: 1px solid #8b9099; }
.pagemark { position: absolute; z-index: -1; right: 279px; bottom: -50px; font: 86px/96px "Liberation Sans", sans-serif; color: #969696; }
table { width: 100%; table-layout: fixed; border-spacing: 0; }
.c-rh { width: 20px; } .c-a { width: 43px; } .c-b { width: 220px; } .c-m { width: 69px; } .c-i { width: 51px; } .c-j { width: 63px; } .c-k { width: 67px; } .c-l { width: 50px; } .c-n { width: 42px; }
th, td { padding: 0; }
thead th { height: 14px; font-size: 9px; line-height: 12px; font-weight: 400; background: #dfe2e7; border-left: 1px solid #a9adb4; border-bottom: 1px solid #a3a8b0; color: #333; }
thead th.sel { background: linear-gradient(#ffd65c, #ffe076); border-color: #c1922d; }
thead .corner { background: linear-gradient(225deg, #dfe2e7 50%, #cfd3da 50%); }
tbody th { background: #dfe2e7; border-bottom: 1px solid #b4b8bf; font-weight: 400; font-size: 10px; line-height: 11px; vertical-align: bottom; color: #333; }
tbody th.sel { background: #ffdc68; }
.r14 { height: 14px; } .r16 { height: 16px; } .r24 { height: 24px; } .r29 { height: 29px; } .r30 { height: 30px; } .r36 { height: 36px; } .r37 { height: 37px; } .r52 { height: 52px; } .r119 { height: 119px; }
td { text-align: center; color: #000; font: bold 11px/16px "DejaVu Sans Condensed", "DejaVu Sans", sans-serif; white-space: nowrap; overflow: hidden; }
td.edge { border-right: 1px solid #0000c8; }
td.desk { background: #a0a0a0; }
td.g { border-left: 1px solid #d8d8d8; border-bottom: 1px solid #d8d8d8; }
td.gl { border-left: 1px solid #d8d8d8; }
.r30 td { font-size: 9px; line-height: 14px; }
td.logo { border-bottom: 2px solid #000; vertical-align: top; }
.l-mil { margin: 0 0 0 auto; } .l-min { margin: 0 0 0 auto; } .l-ect { margin: 20px 31px 0 auto; } .l-ald { margin: 3px auto 0; }
td.title { border-bottom: 1px solid #5a2d78; }
td.green { background: #a9d08e; border-bottom: 2px solid #000; }
td.k { border-left: 2px solid #000; border-bottom: 2px solid #000; }
td.kb { border-bottom: 2px solid #000; }
td.ka { border-left: 2px solid #000; border-bottom: 1px solid #d8d8d8; }
td.d { border-left: 1px dashed #000; border-bottom: 1px dashed #000; }
td.last { border-left: 3px solid #0000d0; }
td.title.last { border-left-color: #ffff20; }
td.item { color: #0070c0; line-height: 18px; font-size: 10px; border-bottom: 1px solid #d8d8d8; }
.item span { font-size: 13px; }
td.desc { background: #bdd7ee; line-height: 18px; font-size: 10px; }
td.pale { background: #ddebf7; }
td.gold { background: #ffd966; }
td.sand { background: #ffe699; font-size: 10px; }
td.part { font-size: 10px; }
td.num { font: bold 15px/18px "Liberation Serif", serif; }

.sheetbar { height: 17px; display: flex; flex: none; justify-content: space-between; background: #dce0e8; border-top: 1px solid #a0a5ae; border-bottom: 1px solid #8c93a3; }
.hscroll { flex: 0 0 554px; display: flex; align-items: center; padding-left: 16px; }
.grip { width: 8px; height: 15px; border: 2px solid #808590; background: #fff; }
.harr { width: 18px; }
.track { flex: 1; }
.hthumb { width: 17px; height: 15px; border: 1px solid #969ba5; border-radius: 2px; background: #f2f4f7; }
.sheets { display: flex; margin-right: 3px; }
.sh { position: relative; z-index: 0; background: #e6e9ef; color: #555; font-size: 12px; }
.sh::before { content: ""; position: absolute; z-index: -1; top: 0; bottom: 0; left: -7px; width: 14px; background: #e6e9ef; border-left: 1px solid #9ba0aa; transform: skewX(40deg); }
.sh.on { background: #fff; color: #222; font-weight: 700; }
.sh.on::before { background: #fff; }
.sh.add { width: 38px; } .w92 { width: 92px; padding-right: 4px; } .w46 { width: 48px; padding-right: 4px; } .w59 { width: 61px; }
.nav { display: flex; width: 61px; justify-content: space-around; background: #e6e9ef; border-left: 1px solid #888; border-right: 1px solid #888; }

.status { height: 21px; flex: none; display: flex; justify-content: space-between; background: linear-gradient(#f0f2f5, #d2d5da 60%, #bfc3c9); }
.ready { width: 49px; padding: 4px 0 0 8px; border-right: 1px solid #888; }
.zoomctl { display: flex; align-items: center; padding: 0 4px 0 6px; border-left: 1px solid #999; }
.zoomctl button { width: 19px; height: 20px; }
.zoomctl .pct { width: 38px; text-align: center; }
.zoomctl .rnd { width: 16px; }
.zoom { appearance: none; width: 100px; height: 14px; background: linear-gradient(#777, #777) center / 100% 1px no-repeat, linear-gradient(#777, #777) center / 1px 7px no-repeat; }
.zoom::-webkit-slider-thumb { appearance: none; width: 9px; height: 13px; background: #f7f7f7; border: 1px solid #666; border-radius: 1px 1px 5px 5px; }

.taskbar { height: 40px; flex: none; display: flex; background: #1d1d1d; color: #fff; }
.tray { display: flex; align-items: center; margin-left: 4px; border-left: 1px solid #777; }
.note { position: relative; width: 50px; }
.note b { position: absolute; left: 16px; bottom: 2px; font-size: 10px; }
.clock { width: 56px; display: flex; flex-direction: column; text-align: center; line-height: 17px; font-size: 10px; white-space: nowrap; }
.lang { width: 44px; font-size: 13px; }
.ti { width: 24px; }
.match { gap: 9px; margin-left: 19px; font-size: 13px; }
.apps { display: flex; margin-left: auto; }
.app { width: 49px; height: 40px; }
.app.cur { width: 48px; margin-right: 1px; background: #4a4a4a; border-bottom: 2px solid #76b9ed; }
.app.run { background: linear-gradient(#76b9ed, #76b9ed) center bottom / 40px 2px no-repeat; }
.ai b { width: 22px; height: 22px; line-height: 21px; border-radius: 4px; background: #330000; color: #ff9a00; font-size: 12px; }
.search { width: 288px; display: flex; align-items: center; background: #f2f2f2; color: #222; padding: 0 11px 0 1px; align-self: stretch; margin-left: 1px; }
.search svg:first-child { align-self: flex-end; }
.search input { flex: 1; min-width: 0; padding-right: 13px; font-size: 15px; line-height: 20px; }
.search input::placeholder { color: #444; opacity: 1; }
.start { width: 48px; }

.brand { position: absolute; left: 600px; bottom: 13px; width: 166px; display: flex; flex-direction: column; align-items: center; pointer-events: none; color: rgba(150, 150, 150, .3); }
.brand span { font: 500 28px/34px Roboto, sans-serif; }
.brand span:first-child { font: bold 46px/46px "DejaVu Sans", sans-serif; }
```
